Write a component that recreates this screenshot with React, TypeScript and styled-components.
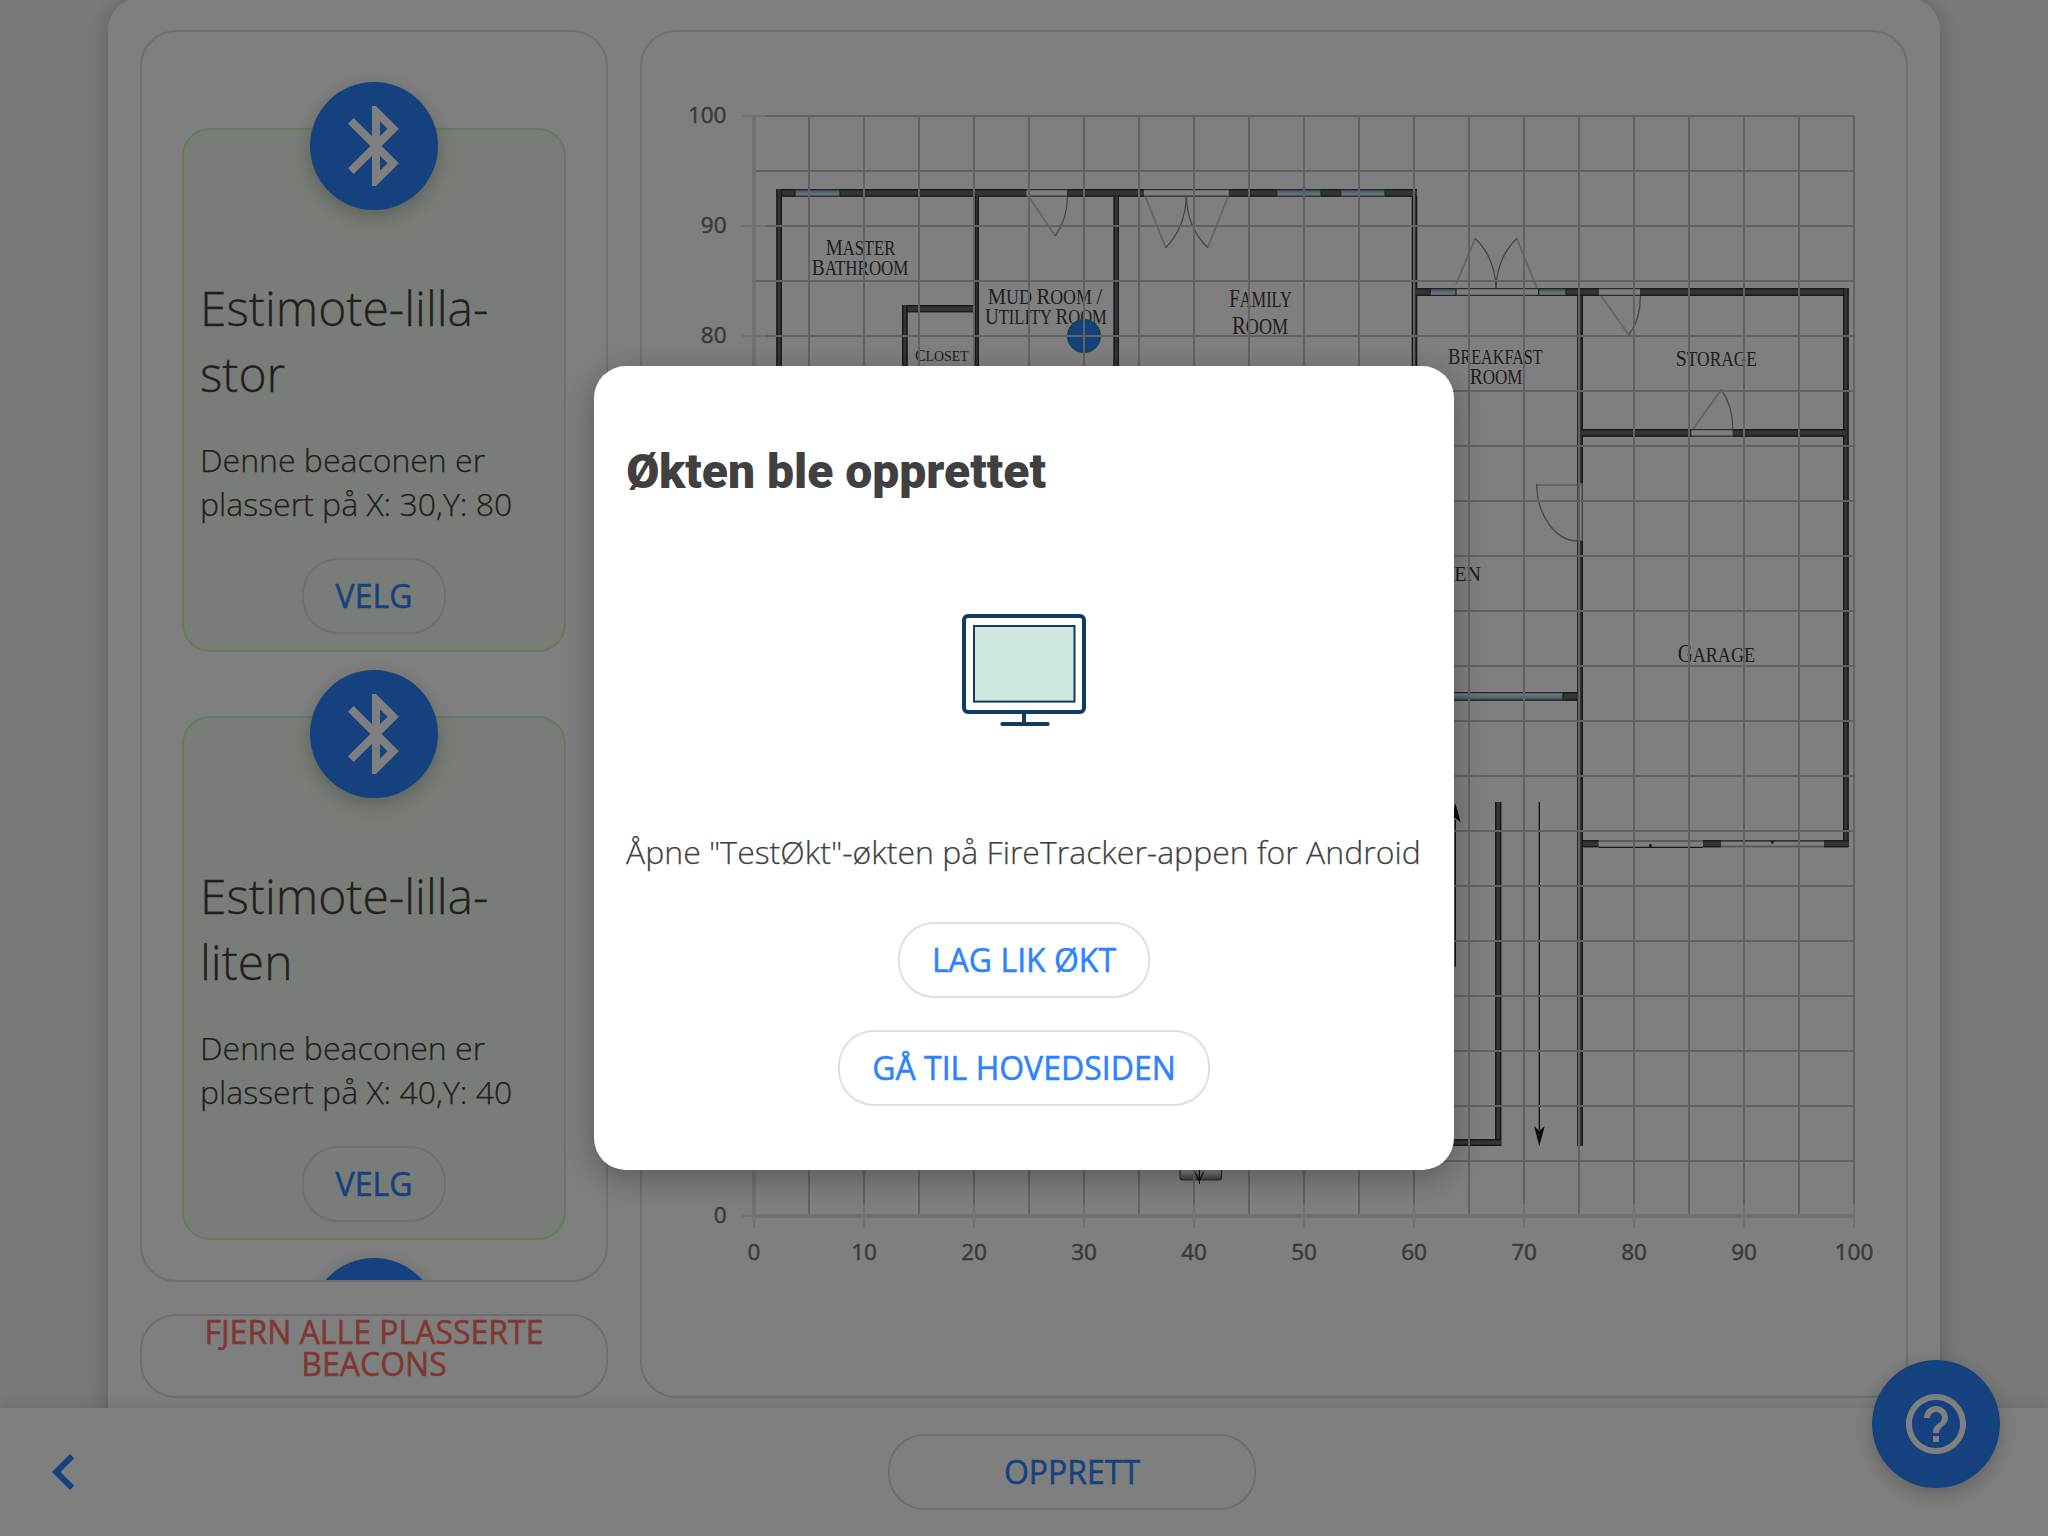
import React from 'react';
import styled, { createGlobalStyle } from 'styled-components';

const BLUE = '#2c82ff';
const BORDER = '#dfdfdf';

const GlobalStyle = createGlobalStyle`
  *, *::before, *::after { box-sizing: border-box; }
  html, body { margin: 0; padding: 0; }
  body {
    width: 2048px;
    height: 1536px;
    overflow: hidden;
    background: #f3f3f3;
    color: #404040;
    font-family: 'Open Sans', 'Noto Sans', sans-serif;
    font-size: 32px;
    font-weight: 300;
  }
  h1, h2, p { margin: 0; }
`;

const Screen = styled.div`
  position: relative;
  display: flex;
  flex-direction: column;
  width: 2048px;
  height: 1536px;
  overflow: hidden;
`;

const Main = styled.main`
  flex: 1;
  min-height: 0;
  display: flex;
  justify-content: center;
`;

const Sheet = styled.section`
  display: grid;
  grid-template-columns: 468px 1fr;
  gap: 32px;
  width: 1832px;
  height: 1500px;
  margin-top: -2px;
  padding: 32px 32px 100px;
  border-radius: 32px;
  background: #fff;
  box-shadow: 0 4px 24px rgba(0, 0, 0, 0.24);
`;

const Sidebar = styled.div`
  display: flex;
  flex-direction: column;
  gap: 32px;
  min-height: 0;
`;

const BeaconList = styled.div`
  height: 1252px;
  padding: 96px 40px 0;
  border: 2px solid ${BORDER};
  border-radius: 36px;
  overflow: hidden;
  display: flex;
  flex-direction: column;
  gap: 64px;
`;

const BeaconCard = styled.article`
  flex: none;
  display: flex;
  flex-direction: column;
  height: 524px;
  padding: 16px;
  border: 2px solid #ccf5bd;
  border-radius: 28px;
  background: #f1fbee;
`;

const RoundIcon = styled.div`
  flex: none;
  display: flex;
  align-items: center;
  justify-content: center;
  width: 128px;
  height: 128px;
  border-radius: 50%;
  background: ${BLUE};
  color: #fff;
  box-shadow: 0 6px 20px rgba(0, 0, 0, 0.24);
`;

const BeaconIcon = styled(RoundIcon)`
  align-self: center;
  margin-top: -64px;
  padding-left: 3px;
`;

const BeaconTitle = styled.h2`
  margin-top: 65px;
  font-size: 48px;
  font-weight: 300;
  line-height: 65.5px;
  -webkit-text-stroke: 0.3px;
`;

const BeaconText = styled.p`
  margin: 32px 0;
  line-height: 44px;
  -webkit-text-stroke: 0.25px;
`;

const Button = styled.button<{ $width?: number }>`
  flex: none;
  align-self: center;
  width: ${(p) => (p.$width ? `${p.$width}px` : 'auto')};
  height: 76px;
  padding: 0;
  border: 2px solid ${BORDER};
  border-radius: 36px;
  background: transparent;
  color: ${BLUE};
  font-family: inherit;
  font-size: 32px;
  font-weight: 400;
  line-height: 32px;
  text-transform: uppercase;
  -webkit-text-stroke: 0.5px;
`;

const ClearButton = styled(Button)`
  display: flex;
  align-items: flex-start;
  justify-content: center;
  height: 84px;
  padding: 0 32px;
  color: #ff7062;
`;

const PlanPanel = styled.div`
  height: 1368px;
  border: 2px solid ${BORDER};
  border-radius: 36px;
  overflow: hidden;
`;

const PlanSvg = styled.svg`
  display: block;
`;

const Footer = styled.footer`
  position: relative;
  flex: none;
  display: grid;
  grid-template-columns: 96px 1fr;
  align-items: center;
  height: 128px;
  background: #fff;
  box-shadow: 0 0 20px rgba(0, 0, 0, 0.14);
`;

const BackSlot = styled.div`
  display: flex;
  padding-left: 28px;
  color: ${BLUE};
  svg { flex: none; }
`;

const FooterCenter = styled.div`
  display: flex;
  justify-content: center;
`;

const HelpFab = styled(RoundIcon)`
  position: absolute;
  right: 48px;
  bottom: 48px;
`;

const Backdrop = styled.div`
  position: absolute;
  inset: 0;
  display: flex;
  align-items: center;
  justify-content: center;
  background: rgba(0, 0, 0, 0.5);
`;

const Dialog = styled.div`
  display: flex;
  flex-direction: column;
  width: 860px;
  height: 804px;
  padding: 73px 32px 64px;
  border-radius: 32px;
  background: #fff;
  box-shadow: 0 8px 32px rgba(0, 0, 0, 0.3);
`;

const DialogTitle = styled.h1`
  font-family: Roboto, 'Open Sans', sans-serif;
  font-size: 48px;
  font-weight: 900;
  line-height: 65px;
  white-space: nowrap;
`;

const MonitorSlot = styled.div`
  display: flex;
  justify-content: center;
  height: 128px;
  margin: 102px 0 96px;
`;

const DialogText = styled.p`
  line-height: 44px;
  margin-bottom: 48px;
  white-space: nowrap;
  -webkit-text-stroke: 0.25px;
`;

const DialogActions = styled.div`
  display: flex;
  flex-direction: column;
  gap: 32px;
`;

type IconProps = { size: number; d: string };
const Icon = ({ size, d }: IconProps) => (
  <svg width={size} height={size} viewBox="0 0 24 24" fill="currentColor">
    <path d={d} />
  </svg>
);

const BLUETOOTH =
  'M17.71 7.71L12 2h-1v7.59L6.41 5 5 6.41 10.59 12 5 17.59 6.41 19 11 14.41V22h1l5.71-5.71-4.3-4.29 4.3-4.29zM13 5.83l1.88 1.88L13 9.59V5.83zm1.88 10.46L13 18.17v-3.76l1.88 1.88z';
const CHEVRON = 'M15.41 7.41L14 6l-6 6 6 6 1.41-1.41L10.83 12z';
const HELP =
  'M11 18h2v-2h-2v2zm1-16C6.48 2 2 6.48 2 12s4.48 10 10 10 10-4.48 10-10S17.52 2 12 2zm0 18c-4.41 0-8-3.59-8-8s3.59-8 8-8 8 3.59 8 8-3.59 8-8 8zm0-14c-2.21 0-4 1.79-4 4h2c0-1.1.9-2 2-2s2 .9 2 2c0 2-3 1.75-3 5h2c0-2.25 3-2.5 3-5 0-2.21-1.79-4-4-4z';

/* ---- Floor plan ---- */

type Box = [number, number, number, number];

// Wall segments as [x1, y1, x2, y2]
const WALLS: Box[] = [
  [776.3, 189, 795, 196.8],
  [840, 189, 1026.7, 196.8],
  [1066.7, 189, 1144, 196.8],
  [1228.5, 189, 1276.7, 196.8],
  [1321, 189, 1340.7, 196.8],
  [1385, 189, 1417, 196.8],
  [776.3, 189, 782, 380],
  [974.7, 196, 979, 380],
  [902, 305, 975, 312.3],
  [902, 305, 907.6, 380],
  [1113.5, 196, 1119, 380],
  [1411.8, 196, 1417.2, 380],
  [1415.7, 288, 1430.3, 296],
  [1566, 288, 1599.3, 296],
  [1640, 288, 1848.7, 296],
  [1577.3, 296, 1583, 483.3],
  [1577.3, 540.7, 1583, 1146],
  [1843, 288, 1848.7, 847],
  [1580.3, 429, 1691.7, 436.7],
  [1732.3, 429, 1846, 436.7],
  [1563, 692, 1577.7, 700.7],
  [1583, 840, 1598.7, 847.3],
  [1703, 840, 1721, 847.3],
  [1824, 840, 1848.7, 847.3],
  [1495, 802, 1501.3, 1146],
  [1440, 1139, 1501, 1146],
];

const WINDOWS: { box: Box; flip?: boolean }[] = [
  { box: [795, 189, 840, 196.8] },
  { box: [1276.7, 189, 1321, 196.8] },
  { box: [1340.7, 189, 1385, 196.8] },
  { box: [1430.3, 288, 1456, 296] },
  { box: [1538.7, 288, 1566, 296] },
  { box: [1440, 692, 1563, 700.7], flip: true },
];

const OPENINGS: Box[] = [
  [1026.7, 189, 1066.7, 196.8],
  [1144, 189, 1228.5, 196.8],
  [1456, 288, 1538.7, 296],
  [1599.3, 288, 1640, 296],
  [1691.7, 429, 1732.3, 436.7],
];

// Door leaf (light line) and swing arc (darker curve)
const DOORS: { leaf: string; arc: string }[] = [
  { leaf: 'M1029 197L1055.3 236', arc: 'M1055.3 236Q1067.5 218 1067.4 197' },
  { leaf: 'M1145.5 197L1165.7 247.7', arc: 'M1165.7 247.7Q1185 228 1186.3 197' },
  { leaf: 'M1228 197L1207.7 247.7', arc: 'M1207.7 247.7Q1187.5 228 1186.3 197' },
  { leaf: 'M1456 284L1475.3 238.5', arc: 'M1475.3 238.5Q1495 258 1496 288' },
  { leaf: 'M1537 288L1516.7 238.5', arc: 'M1516.7 238.5Q1497 258 1496 288' },
  { leaf: 'M1601 296L1629 335', arc: 'M1629 335Q1641 318 1640.3 296' },
  { leaf: 'M1693 429L1721.3 389.7', arc: 'M1721.3 389.7Q1733 406 1732.7 429' },
  { leaf: 'M1581 485L1536.7 485', arc: 'M1536.7 484C1537 516 1556 541 1578 541' },
];

type Room = { text: string; x: number; y: number; w: number; size: number };
const ROOMS: Room[] = [
  { text: 'Master', x: 825.7, y: 255, w: 69.5, size: 23 },
  { text: 'Bathroom', x: 811.7, y: 275, w: 96.7, size: 23 },
  { text: 'Mud Room /', x: 987.7, y: 303.7, w: 114.5, size: 23 },
  { text: 'Utility Room', x: 985, y: 324.3, w: 121.8, size: 23 },
  { text: 'Closet', x: 915, y: 360.7, w: 53.5, size: 17.5 },
  { text: 'Family', x: 1229.3, y: 307.3, w: 62.5, size: 26 },
  { text: 'Room', x: 1232, y: 334.3, w: 56, size: 26 },
  { text: 'Breakfast', x: 1448, y: 364.3, w: 94.7, size: 23.5 },
  { text: 'Room', x: 1469.7, y: 384.3, w: 52.8, size: 23.5 },
  { text: 'Storage', x: 1675.7, y: 366.3, w: 81.3, size: 24 },
  { text: 'Kitchen', x: 1391, y: 580.7, w: 90, size: 25 },
  { text: 'Garage', x: 1677.7, y: 662.3, w: 77.3, size: 25 },
];

const X0 = 754;
const Y0 = 1216;
const UNIT = 11;
const px = (v: number) => X0 + v * UNIT;
const py = (v: number) => Y0 - v * UNIT;
const MINOR = Array.from({ length: 21 }, (_, i) => i * 5);
const MAJOR = Array.from({ length: 11 }, (_, i) => i * 10);

const RoomLabel = ({ text, x, y, w, size }: Room) => (
  <text x={x} y={y} textLength={w} lengthAdjust="spacingAndGlyphs">
    {text.split(/(?=[A-Z/])|(?<=[A-Z])/).map((part, i) => (
      <tspan key={i} fontSize={part === part.toUpperCase() ? size : size * 0.87}>
        {part.toUpperCase()}
      </tspan>
    ))}
  </text>
);

const Wall = ({ box: [x1, y1, x2, y2] }: { box: Box }) => {
  const horizontal = x2 - x1 > y2 - y1;
  return (
    <g>
      <rect x={x1} y={y1} width={x2 - x1} height={y2 - y1} fill="#686868" />
      <path
        d={
          horizontal
            ? `M${x1} ${y1 + 0.7}H${x2}M${x1} ${y2 - 0.7}H${x2}`
            : `M${x1 + 0.7} ${y1}V${y2}M${x2 - 0.7} ${y1}V${y2}`
        }
        stroke="#303030"
        strokeWidth={1.4}
      />
    </g>
  );
};

const FloorPlan = () => (
  <PlanSvg width={1264} height={1364} viewBox="642 32 1264 1364">
    <defs>
      <linearGradient id="glass" x1="0" y1="0" x2="0" y2="1">
        <stop offset="0.1" stopColor="#7fb0c0" />
        <stop offset="0.9" stopColor="#f4fafc" />
      </linearGradient>
      <linearGradient id="glassFlip" x1="0" y1="1" x2="0" y2="0">
        <stop offset="0.1" stopColor="#7fb0c0" />
        <stop offset="0.9" stopColor="#f4fafc" />
      </linearGradient>
      <linearGradient id="step" x1="0" y1="0" x2="0" y2="1">
        <stop offset="0.75" stopColor="#f4f4f4" />
        <stop offset="1" stopColor="#777" />
      </linearGradient>
    </defs>

    {WALLS.map((w, i) => (
      <Wall key={i} box={w} />
    ))}
    {OPENINGS.map(([x1, y1, x2, y2], i) => (
      <g key={i}>
        <rect x={x1} y={y1} width={x2 - x1} height={y2 - y1} fill="#fff" />
        <path d={`M${x1} ${y1 + 0.7}H${x2}M${x1} ${y2 - 0.6}H${x2}`} stroke="#555" strokeWidth={1.2} />
      </g>
    ))}
    {WINDOWS.map(({ box: [x1, y1, x2, y2], flip }, i) => (
      <g key={i}>
        <rect x={x1} y={y1} width={x2 - x1} height={y2 - y1} fill={flip ? 'url(#glassFlip)' : 'url(#glass)'} />
        <path
          d={`M${x1} ${y1 + 0.6}H${x2}M${x1} ${y2 - 0.6}H${x2}M${x1} ${y1}V${y2}M${x2} ${y1}V${y2}`}
          stroke="#3c4448"
          strokeWidth={1.2}
        />
      </g>
    ))}
    {DOORS.map((d, i) => (
      <g key={i} fill="none">
        <path d={d.leaf} stroke="#cdcdcd" strokeWidth={2} />
        <path d={d.arc} stroke="#8c8c8c" strokeWidth={1.3} />
      </g>
    ))}

    {/* side door frame */}
    <path d="M1577.8 483V541M1582.2 483V541" stroke="#555" strokeWidth={1} />

    {/* garage ports */}
    <path d="M1599 841H1703M1721 846.4H1824" stroke="#b4b4b4" strokeWidth={2} />
    <path d="M1599 847.4H1703M1721 840.8H1824" stroke="#333" strokeWidth={1.2} />
    <path d="M1650.4 844V847M1772.3 841V843.5" stroke="#333" strokeWidth={2.6} />

    {/* driveway arrows */}
    <path d="M1539.3 802V1130M1455.3 966.7V820" stroke="#181818" strokeWidth={1.3} />
    <path
      d="M1539.3 1146L1534 1126L1539.3 1131L1544.8 1126ZM1455.3 803L1450 822.5L1455.3 818L1460.7 822.5Z"
      fill="#181818"
    />

    {/* entrance step */}
    <rect x={1180} y={1150} width={41.5} height={30} rx={3} fill="url(#step)" stroke="#555" strokeWidth={1.2} />
    <path d="M1199.4 1160V1184M1195 1172L1199.4 1181L1203.5 1172" fill="none" stroke="#222" strokeWidth={1.2} />

    <g fill="#3a3a3a" fontFamily="'Liberation Serif', serif">
      {ROOMS.map((r, i) => (
        <RoomLabel key={i} {...r} />
      ))}
    </g>

    <circle cx={px(30)} cy={py(80)} r={16.2} fill={BLUE} stroke="#14909c" strokeWidth={1.6} />

    <path
      d={MINOR.map((v) => `M${px(v)} ${py(100)}V${py(0)}M${px(0)} ${py(v)}H${px(100)}`).join('')}
      stroke="#c4c4c4"
      strokeWidth={2}
    />
    <path
      d={MAJOR.map((v) => `M${px(v)} ${Y0 - 12}V${Y0 + 12}M${X0 - 12} ${py(v)}H${X0 + 12}`).join('')}
      stroke="#e2e2e2"
      strokeWidth={2}
    />
    <path d={`M${X0} ${py(100)}V${Y0}H${px(100)}`} fill="none" stroke="#e2e2e2" strokeWidth={4} />

    <g
      fill="#73737b"
      stroke="#73737b"
      strokeWidth={0.5}
      fontSize={22.5}
      fontWeight={400}
      fontFamily="'Open Sans', sans-serif"
    >
      {MAJOR.map((v) => (
        <text key={`x${v}`} x={px(v)} y={1260} textAnchor="middle">
          {v}
        </text>
      ))}
      {MAJOR.filter((v) => v === 0 || v >= 80).map((v) => (
        <text key={`y${v}`} x={726.5} y={py(v) + 7} textAnchor="end">
          {v}
        </text>
      ))}
    </g>
  </PlanSvg>
);

const Monitor = () => (
  <svg width={128} height={128} viewBox="960 606 128 128" fill="none" stroke="#123a63">
    <rect x={964} y={616} width={120} height={96} rx={4} strokeWidth={4} />
    <rect x={974} y={626} width={100.5} height={75.6} fill="#cee8df" strokeWidth={2} />
    <path d="M1024 712V724" strokeWidth={4} />
    <path d="M1002.3 724H1047.7" strokeWidth={4} strokeLinecap="round" />
  </svg>
);

const BEACONS = [
  { name: 'Estimote-lilla-stor', x: 30, y: 80 },
  { name: 'Estimote-lilla-liten', x: 40, y: 40 },
];

const BluetoothBadge = () => (
  <BeaconIcon>
    <Icon size={96} d={BLUETOOTH} />
  </BeaconIcon>
);

export default function App() {
  return (
    <>
      <GlobalStyle />
      <Screen>
        <Main>
          <Sheet>
            <Sidebar>
              <BeaconList>
                {BEACONS.map((b) => (
                  <BeaconCard key={b.name}>
                    <BluetoothBadge />
                    <BeaconTitle>{b.name}</BeaconTitle>
                    <BeaconText>{`Denne beaconen er plassert på X: ${b.x},Y: ${b.y}`}</BeaconText>
                    <Button $width={144}>Velg</Button>
                  </BeaconCard>
                ))}
                <BeaconCard>
                  <BluetoothBadge />
                </BeaconCard>
              </BeaconList>
              <ClearButton $width={468}>Fjern alle plasserte beacons</ClearButton>
            </Sidebar>
            <PlanPanel>
              <FloorPlan />
            </PlanPanel>
          </Sheet>
        </Main>
        <Footer>
          <BackSlot>
            <Icon size={72} d={CHEVRON} />
          </BackSlot>
          <FooterCenter>
            <Button $width={368}>Opprett</Button>
          </FooterCenter>
        </Footer>
        <HelpFab>
          <Icon size={72} d={HELP} />
        </HelpFab>
        <Backdrop>
          <Dialog>
            <DialogTitle>Økten ble opprettet</DialogTitle>
            <MonitorSlot>
              <Monitor />
            </MonitorSlot>
            <DialogText>Åpne "TestØkt"-økten på FireTracker-appen for Android</DialogText>
            <DialogActions>
              <Button $width={252}>Lag lik økt</Button>
              <Button $width={372}>Gå til hovedsiden</Button>
            </DialogActions>
          </Dialog>
        </Backdrop>
      </Screen>
    </>
  );
}
